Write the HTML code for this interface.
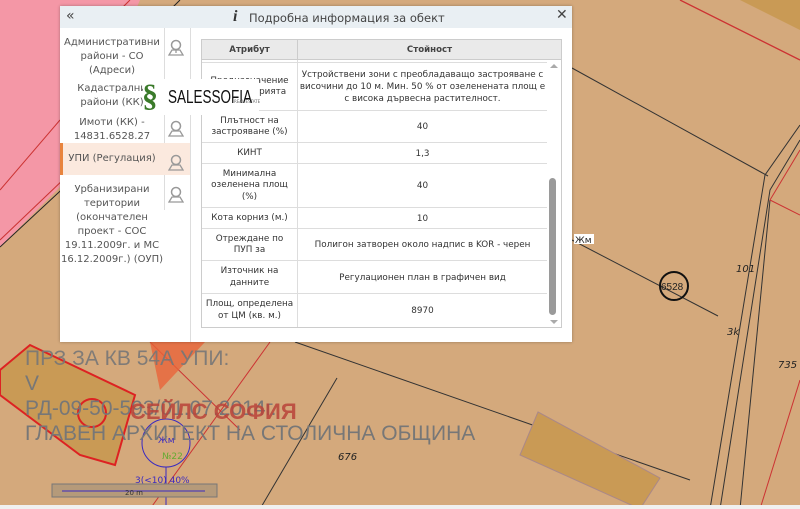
<!DOCTYPE html>
<html><head><meta charset="utf-8"><style>
body{margin:0;width:800px;height:509px;overflow:hidden;position:relative;background:#d4a97c;font-family:"DejaVu Sans","Liberation Sans",sans-serif}
.a{position:absolute}
.dlg{left:60px;top:6px;width:512px;height:336px;background:#fff;box-shadow:0 0 3px rgba(0,0,0,.3)}
.hd{left:0;top:0;width:512px;height:22px;background:#e9eff3}
.li{position:absolute;left:0;width:104px;text-align:center;font-size:10px;line-height:14px;color:#555}
.pin{position:absolute;left:108px;width:16px;height:18px}
.row{position:absolute;left:0;width:345px;border-top:1px solid #ddd;font-size:8.8px;color:#333;display:flex}
.row .c1{width:95px;border-right:1px solid #ddd;display:flex;align-items:center;justify-content:center;text-align:center;line-height:11.5px}
.row .c2{flex:1;display:flex;align-items:center;justify-content:center;text-align:center;line-height:12px}
</style></head><body>
<svg class="a" style="left:0;top:0" width="800" height="509">
<polygon points="0,0 140,0 60,187 0,247" fill="#f497a6"/>
<line x1="0" y1="247" x2="115" y2="140" stroke="#222" stroke-width="1"/>
<line x1="0" y1="240" x2="110" y2="135" stroke="#c33" stroke-width="1"/>
<line x1="60" y1="120" x2="0" y2="190" stroke="#c33"/>
<line x1="130" y1="0" x2="100" y2="30" stroke="#c33"/>
<line x1="180" y1="0" x2="160" y2="20" stroke="#222"/>
<line x1="680" y1="0" x2="800" y2="60" stroke="#c33" stroke-width="1.3"/>
<polygon points="740,0 800,0 800,30" fill="#c99a55"/>
<line x1="572" y1="68" x2="768" y2="176" stroke="#333"/>
<line x1="572" y1="240" x2="718" y2="316" stroke="#333"/>
<circle cx="674" cy="286" r="14" fill="none" stroke="#111" stroke-width="2"/>
<text x="661" y="290" font-size="10" fill="#222" font-family="Liberation Sans">6528</text>
<polyline points="800,125 765,175 710,509" fill="none" stroke="#333"/>
<polyline points="800,140 770,190 720,509" fill="none" stroke="#333"/>
<line x1="770" y1="200" x2="740" y2="509" stroke="#333"/>
<polyline points="800,150 770,200 800,215" fill="none" stroke="#c33"/>
<text x="736" y="272" font-size="10" font-style="italic" fill="#222">101</text>
<text x="727" y="335" font-size="10" font-style="italic" fill="#222">3k</text>
<text x="778" y="368" font-size="10" font-style="italic" fill="#222">735</text>
<rect x="574" y="234" width="20" height="10" fill="#fff"/><text x="575" y="243" font-size="9" fill="#222">Жм</text>
<line x1="800" y1="380" x2="760" y2="509" stroke="#c33"/>
<line x1="295" y1="342" x2="690" y2="480" stroke="#333"/>
<line x1="337" y1="378" x2="260" y2="509" stroke="#333"/>
<line x1="270" y1="342" x2="150" y2="509" stroke="#c33"/>
<line x1="150" y1="342" x2="240" y2="430" stroke="#c33"/>
<polygon points="150,342 205,342 160,390" fill="#e8643a" opacity=".8"/>
<polygon points="538,412 660,478 640,509 520,455" fill="#c99a55" stroke="#a88"/>
<polygon points="0,370 30,345 135,395 115,465 80,455 0,395" fill="#c99a55" stroke="#d22" stroke-width="2"/>
<circle cx="92" cy="413" r="14" fill="none" stroke="#d22" stroke-width="2"/>
<circle cx="166" cy="443" r="24" fill="none" stroke="#3a2ac0"/>
<line x1="166" y1="467" x2="166" y2="509" stroke="#3a2ac0"/>
<text x="158" y="443" font-size="9" fill="#3a2ac0">Жм</text>
<text x="162" y="459" font-size="9" fill="#6a3">№22</text>
<text x="135" y="483" font-size="9" fill="#3a2ac0">3(&lt;10)  40%</text>
<rect x="52" y="484" width="165" height="13" fill="#b59a7a" stroke="#777"/>
<line x1="62" y1="491" x2="205" y2="491" stroke="#3a2ac0"/>
<text x="125" y="495" font-size="7" fill="#333">20 m</text>
<text x="338" y="460" font-size="10" font-style="italic" fill="#222">676</text>
<text x="25" y="365" font-size="21" fill="#777" font-family="Liberation Sans" opacity=".9">ПРЗ ЗА КВ 54А УПИ:</text>
<text x="25" y="390" font-size="21" fill="#777" font-family="Liberation Sans">V</text>
<text x="25" y="415" font-size="21" fill="#777" font-family="Liberation Sans">РД-09-50-593/01.07.2014г.</text>
<text x="130" y="419" font-size="22" font-weight="bold" fill="#b9443a" font-family="Liberation Sans" opacity=".85">СЕЙЛС СОФИЯ</text>
<text x="25" y="440" font-size="21" fill="#777" font-family="Liberation Sans">ГЛАВЕН АРХИТЕКТ НА СТОЛИЧНА ОБЩИНА</text>
<rect x="0" y="505" width="800" height="4" fill="#f0f0f0"/>
</svg>
<div class="a dlg">
 <div class="a hd"></div>
 <div class="a" style="left:6px;top:2px;font-size:14px;color:#444">«</div>
 <div class="a" style="left:173px;top:2px;font-size:16px;font-weight:bold;font-family:'Liberation Serif',serif;color:#333;font-style:italic">i</div>
 <div class="a" style="left:189px;top:5px;font-size:11.5px;color:#444">Подробна информация за обект</div>
 <div class="a" style="left:496px;top:1px;font-size:14px;font-weight:bold;color:#444">✕</div>
 <div class="a" style="left:104px;top:22px;width:1px;height:182px;background:#ddd"></div>
 <div class="a" style="left:130px;top:22px;width:1px;height:314px;background:#ddd"></div>
 <div class="a" style="left:0;top:137px;width:130px;height:32px;background:#fbe9de"></div>
 <div class="a" style="left:0;top:137px;width:3px;height:32px;background:#e8843e"></div>
 <div class="li" style="top:30px">Административни<br>райони - СО<br>(Адреси)</div>
 <div class="li" style="top:76px">Кадастрални<br>райони (КК)</div>
 <div class="li" style="top:110px">Имоти (КК) -<br>14831.6528.27</div>
 <div class="li" style="top:146px">УПИ (Регулация)</div>
 <div class="li" style="top:177px">Урбанизирани<br>територии<br>(окончателен<br>проект - СОС<br>19.11.2009г. и МС<br>16.12.2009г.) (ОУП)</div>
 <svg class="pin" style="top:33px" viewBox="0 0 16 18"><circle cx="8" cy="6" r="4.5" fill="none" stroke="#999" stroke-width="1.5"/><path d="M1 16 L4 11 H12 L15 16 Z M8 11 L8 14" fill="none" stroke="#999" stroke-width="1.3"/></svg>
 <svg class="pin" style="top:114px" viewBox="0 0 16 18"><circle cx="8" cy="6" r="4.5" fill="none" stroke="#999" stroke-width="1.5"/><path d="M1 16 L4 11 H12 L15 16 Z" fill="none" stroke="#999" stroke-width="1.3"/></svg>
 <svg class="pin" style="top:148px" viewBox="0 0 16 18"><circle cx="8" cy="6" r="4.5" fill="none" stroke="#999" stroke-width="1.5"/><path d="M1 16 L4 11 H12 L15 16 Z" fill="none" stroke="#999" stroke-width="1.3"/></svg>
 <svg class="pin" style="top:180px" viewBox="0 0 16 18"><circle cx="8" cy="6" r="4.5" fill="none" stroke="#999" stroke-width="1.5"/><path d="M1 16 L4 11 H12 L15 16 Z" fill="none" stroke="#999" stroke-width="1.3"/></svg>
 <div class="a" style="left:141px;top:33px;width:359px;height:287px;border:1px solid #ccc;overflow:hidden">
  <div class="a" style="left:0;top:0;width:359px;height:19px;background:#eaeaea;border-bottom:1px solid #ccc;font-size:8.6px;font-weight:bold;color:#444">
   <div class="a" style="left:0;top:5px;width:95px;text-align:center">Атрибут</div>
   <div class="a" style="left:95px;top:0;width:1px;height:19px;background:#ccc"></div>
   <div class="a" style="left:96px;top:5px;width:263px;text-align:center">Стойност</div>
  </div>
  <div class="row" style="top:22px;height:48px"><div class="c1">Предназначение<br>на територията</div><div class="c2">Устройствени зони с преобладаващо застрояване с<br>височини до 10 м. Мин. 50 % от озеленената площ е<br>с висока дървесна растителност.</div></div>
  <div class="row" style="top:70px;height:32px"><div class="c1">Плътност на<br>застрояване (%)</div><div class="c2">40</div></div>
  <div class="row" style="top:102px;height:21px"><div class="c1">КИНТ</div><div class="c2">1,3</div></div>
  <div class="row" style="top:123px;height:44px"><div class="c1">Минимална<br>озеленена площ<br>(%)</div><div class="c2">40</div></div>
  <div class="row" style="top:167px;height:21px"><div class="c1">Кота корниз (м.)</div><div class="c2">10</div></div>
  <div class="row" style="top:188px;height:32px"><div class="c1">Отреждане по<br>ПУП за</div><div class="c2">Полигон затворен около надпис в KOR - черен</div></div>
  <div class="row" style="top:220px;height:33px"><div class="c1">Източник на<br>данните</div><div class="c2">Регулационен план в графичен вид</div></div>
  <div class="row" style="top:253px;height:33px"><div class="c1">Площ, определена<br>от ЦМ (кв. м.)</div><div class="c2">8970</div></div>
  <div class="a" style="left:0;top:20px;width:345px;height:2px;border-bottom:1px solid #ddd"></div>
  <div class="a" style="left:95px;top:20px;width:1px;height:3px;background:#ddd"></div>
  <div class="a" style="left:348px;top:24px;width:0;height:0;border:4px solid transparent;border-bottom-color:#aaa;border-top:0"></div>
  <div class="a" style="left:347px;top:138px;width:7px;height:137px;background:#9a9a9a;border-radius:4px"></div>
  <div class="a" style="left:348px;top:280px;width:0;height:0;border:4px solid transparent;border-top-color:#aaa;border-bottom:0"></div>
 </div>
</div>
<div class="a" style="left:143px;top:79px;width:116px;height:36px;background:#fff"></div>
<div class="a" style="left:142px;top:77px;font-size:32px;font-weight:bold;color:#3a7a2a;font-family:'Liberation Serif',serif">§</div>
<div class="a" style="left:168px;top:87px;font-size:18px;color:#111;font-family:'Liberation Sans Narrow','Liberation Sans',sans-serif;transform:scaleX(.75);transform-origin:left">SALESSOFIA</div>
<div class="a" style="left:234px;top:99px;font-size:4px;color:#666">REAL ESTATE</div>
</body></html>
